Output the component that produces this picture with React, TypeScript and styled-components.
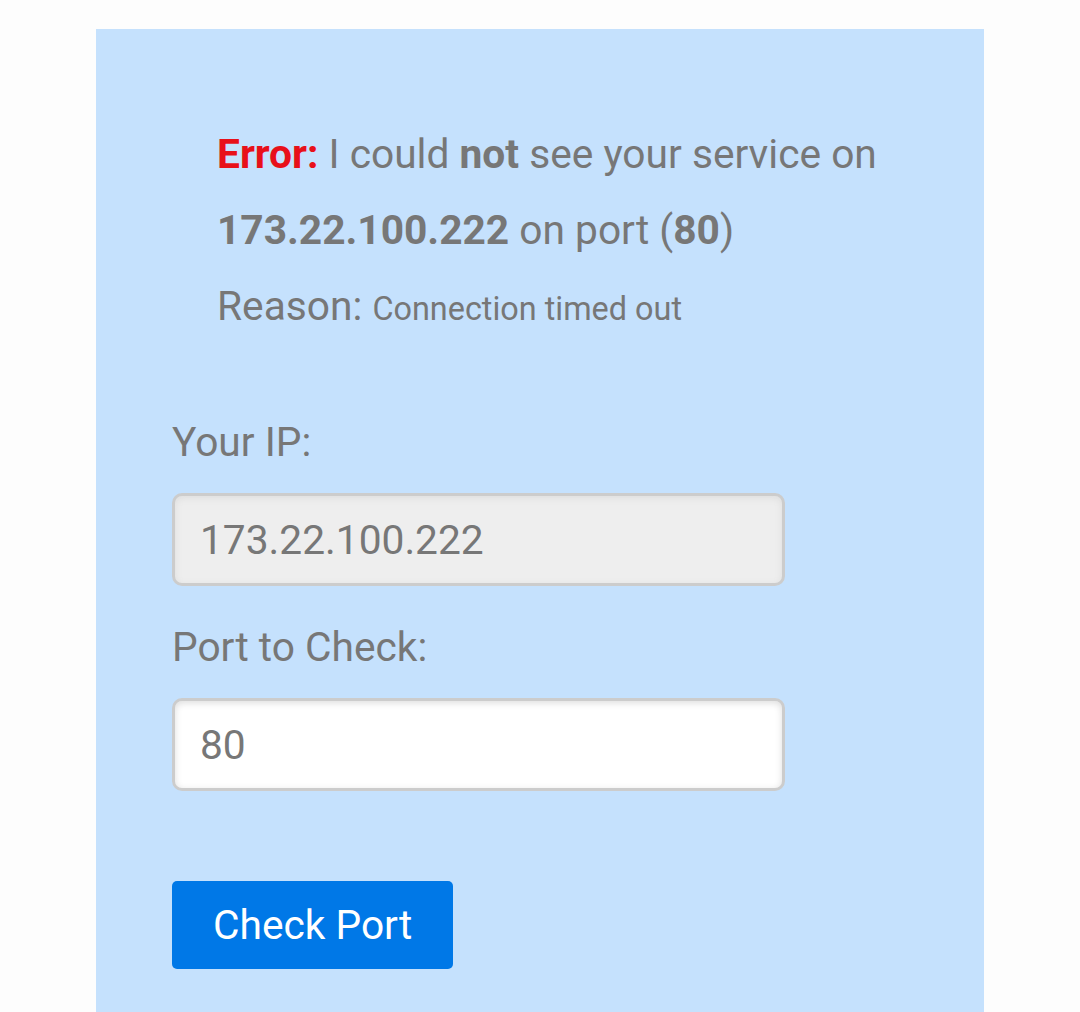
import React from "react";
import styled, { createGlobalStyle } from "styled-components";

const GlobalStyle = createGlobalStyle`
  html, body {
    margin: 0;
    padding: 0;
    background: #fdfdfd;
    font-family: Roboto, "Liberation Sans", Arial, sans-serif;
  }
`;

const Panel = styled.div`
  width: 888px;
  margin: 29px 0 0 96px;
  padding: 87px 76px 80px;
  box-sizing: border-box;
  background: #c5e1fd;
  color: #777777;
`;

const Message = styled.div`
  padding-left: 45px;
  font-size: 40.7px;
  line-height: 76px;
`;

const Line = styled.div`
  white-space: nowrap;
`;

const Strong = styled.b<{ $red?: boolean }>`
  font-weight: 700;
  color: ${(p) => (p.$red ? "#e8101a" : "#777777")};
`;

const Small = styled.span`
  font-size: 32.4px;
`;

const Form = styled.form`
  margin-top: 72px;
  display: flex;
  flex-direction: column;
  align-items: flex-start;
`;

const Label = styled.label`
  font-size: 40.7px;
  line-height: 47px;
  margin-bottom: 27px;
`;

const Input = styled.input<{ $disabled?: boolean }>`
  box-sizing: border-box;
  width: 613px;
  height: 93px;
  padding: 0 25px;
  margin-bottom: ${(p) => (p.$disabled ? "38px" : "90px")};
  border: 3px solid #cccccc;
  border-radius: 10px;
  box-shadow: inset 0 2px 7px #dddddd;
  background: ${(p) => (p.$disabled ? "#eeeeee" : "#ffffff")};
  color: #777777;
  font-family: inherit;
  font-size: 40.7px;
  outline: none;
  -webkit-text-fill-color: #777777;
  opacity: 1;
`;

const Button = styled.button`
  height: 88px;
  padding: 0 41px;
  border: none;
  border-radius: 5px;
  background: #0078e7;
  color: #ffffff;
  font-family: inherit;
  font-size: 40.7px;
  cursor: pointer;
`;

export default function App() {
  return (
    <>
      <GlobalStyle />
      <Panel>
        <Message>
          <Line>
            <Strong $red>Error:</Strong> I could <Strong>not</Strong> see your service on
          </Line>
          <Line>
            <Strong>173.22.100.222</Strong> on port (<Strong>80</Strong>)
          </Line>
          <Line>
            Reason: <Small>Connection timed out</Small>
          </Line>
        </Message>
        <Form onSubmit={(e) => e.preventDefault()}>
          <Label htmlFor="ip">Your IP:</Label>
          <Input id="ip" $disabled disabled value="173.22.100.222" readOnly />
          <Label htmlFor="port">Port to Check:</Label>
          <Input id="port" defaultValue="80" />
          <Button type="submit">Check Port</Button>
        </Form>
      </Panel>
    </>
  );
}
